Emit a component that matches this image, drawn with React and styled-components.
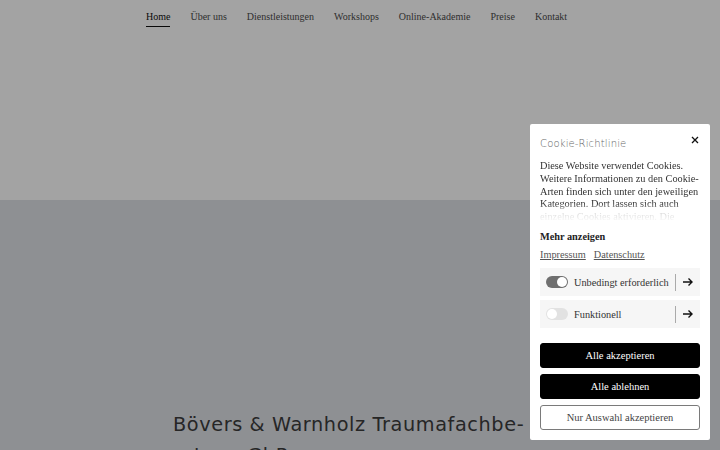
import React from "react";
import styled, { createGlobalStyle } from "styled-components";

const Global = createGlobalStyle`
  html, body { margin: 0; padding: 0; }
  body { width: 720px; height: 450px; overflow: hidden; background: #fff; }
`;

const Page = styled.div`
  width: 720px;
  height: 450px;
  overflow: hidden;
  display: flex;
  flex-direction: column;
`;

const Header = styled.header`
  height: 200px;
  flex: none;
  background: #ffffff;
  display: flex;
  flex-direction: column;
`;

const Nav = styled.nav`
  display: flex;
  gap: 20px;
  padding: 10px 0 0 146px;
  font-family: "Liberation Serif", serif;
  font-size: 10px;
  color: #555;
`;

const NavItem = styled.a`
  line-height: 14px;
  padding-bottom: 2px;
  text-decoration: none;
  color: ${p => (p.$active ? "#111" : "#4a4a4a")};
  border-bottom: 1.5px solid ${p => (p.$active ? "#111" : "transparent")};
`;

const Hero = styled.section`
  flex: 1;
  background: #dfe1e7;
  padding: 209px 0 0 173px;
`;

const Heading = styled.h1`
  margin: 0;
  width: 380px;
  font-family: "DejaVu Sans", sans-serif;
  font-weight: 400;
  font-size: 19.3px;
  letter-spacing: 0.6px;
  line-height: 31px;
  color: #3c3c3c;
`;

const Overlay = styled.div`
  position: fixed;
  inset: 0;
  background: rgba(0, 0, 0, 0.36);
`;

const Panel = styled.aside`
  position: fixed;
  top: 124px;
  right: 10px;
  width: 180px;
  height: 316px;
  box-sizing: border-box;
  background: #fff;
  border-radius: 2px;
  padding: 10px;
  display: flex;
  flex-direction: column;
  font-family: "Liberation Serif", serif;
  color: #333;
`;

const TitleRow = styled.div`
  display: flex;
  justify-content: space-between;
  align-items: center;
  height: 18px;
  margin-bottom: 8px;
`;

const Title = styled.div`
  font-family: "DejaVu Sans", sans-serif;
  font-weight: 200;
  font-size: 10.1px;
  letter-spacing: 0.1px;
  color: #666;
`;

const Close = styled.button`
  border: 0;
  background: none;
  padding: 0;
  width: 10px;
  height: 10px;
  display: flex;
  align-items: center;
  justify-content: center;
  margin-top: -6px;
`;

const Body = styled.p`
  margin: 0;
  height: 62px;
  overflow: hidden;
  font-size: 10.3px;
  line-height: 12.75px;
  color: #333;
  -webkit-mask-image: linear-gradient(to bottom, #000 70%, rgba(0,0,0,0.2) 85%, transparent 100%);
  mask-image: linear-gradient(to bottom, #000 70%, rgba(0,0,0,0.2) 85%, transparent 100%);
`;

const More = styled.div`
  margin-top: 8px;
  font-size: 10.3px;
  font-weight: bold;
  line-height: 14px;
  color: #222;
`;

const Links = styled.div`
  display: flex;
  gap: 8px;
  margin-top: 4px;
  font-size: 10.3px;
  line-height: 14px;
`;

const Link = styled.a`
  color: #555;
  text-decoration: underline;
  text-underline-offset: 1px;
`;

const Rows = styled.div`
  display: flex;
  flex-direction: column;
  gap: 4px;
  margin-top: 6px;
`;

const Row = styled.div`
  height: 28px;
  background: #f6f6f6;
  display: flex;
  align-items: center;
  padding: 0 6px;
  font-size: 10.3px;
  color: #333;
`;

const Toggle = styled.span`
  width: 22px;
  height: 12px;
  border-radius: 6px;
  background: ${p => (p.$on ? "#6f6f6f" : "#e2e2e2")};
  display: flex;
  align-items: center;
  justify-content: ${p => (p.$on ? "flex-end" : "flex-start")};
  padding: 0 1px;
  box-sizing: border-box;
  margin-right: 6px;
  &::after {
    content: "";
    width: 10px;
    height: 10px;
    border-radius: 50%;
    background: #fff;
  }
`;

const Label = styled.span`
  flex: 1;
`;

const Sep = styled.span`
  width: 1px;
  height: 17px;
  background: #aaa;
  margin-right: 6px;
`;

const Arrow = () => (
  <svg width="12" height="10" viewBox="0 0 12 10">
    <path d="M1 5 H10 M6.5 1.5 L10 5 L6.5 8.5" stroke="#111" strokeWidth="1.4" fill="none" />
  </svg>
);

const Buttons = styled.div`
  display: flex;
  flex-direction: column;
  gap: 6px;
  margin-top: auto;
`;

const Btn = styled.button`
  height: 25px;
  border-radius: 3px;
  font-family: "Liberation Serif", serif;
  font-size: 10.5px;
  cursor: pointer;
  background: ${p => (p.$outline ? "#fff" : "#000")};
  color: ${p => (p.$outline ? "#444" : "#fff")};
  border: 1px solid ${p => (p.$outline ? "#7a7a7a" : "#000")};
`;

export default function App() {
  const nav = ["Home", "Über uns", "Dienstleistungen", "Workshops", "Online-Akademie", "Preise", "Kontakt"];
  return (
    <>
      <Global />
      <Page>
        <Header>
          <Nav>
            {nav.map((n, i) => (
              <NavItem key={n} $active={i === 0}>{n}</NavItem>
            ))}
          </Nav>
        </Header>
        <Hero>
          <Heading>Bövers &amp; Warnholz Traumafachbe-ratung GbR</Heading>
        </Hero>
      </Page>
      <Overlay />
      <Panel>
        <TitleRow>
          <Title>Cookie-Richtlinie</Title>
          <Close aria-label="close">
            <svg width="8" height="8" viewBox="0 0 8 8">
              <path d="M1 1 L7 7 M7 1 L1 7" stroke="#111" strokeWidth="1.3" />
            </svg>
          </Close>
        </TitleRow>
        <Body>
          Diese Website verwendet Cookies. Weitere Informationen zu den Cookie-Arten finden sich unter den jeweiligen Kategorien. Dort lassen sich auch einzelne Cookies aktivieren. Die
        </Body>
        <More>Mehr anzeigen</More>
        <Links>
          <Link>Impressum</Link>
          <Link>Datenschutz</Link>
        </Links>
        <Rows>
          <Row>
            <Toggle $on />
            <Label>Unbedingt erforderlich</Label>
            <Sep />
            <Arrow />
          </Row>
          <Row>
            <Toggle />
            <Label>Funktionell</Label>
            <Sep />
            <Arrow />
          </Row>
        </Rows>
        <Buttons>
          <Btn>Alle akzeptieren</Btn>
          <Btn>Alle ablehnen</Btn>
          <Btn $outline>Nur Auswahl akzeptieren</Btn>
        </Buttons>
      </Panel>
    </>
  );
}
